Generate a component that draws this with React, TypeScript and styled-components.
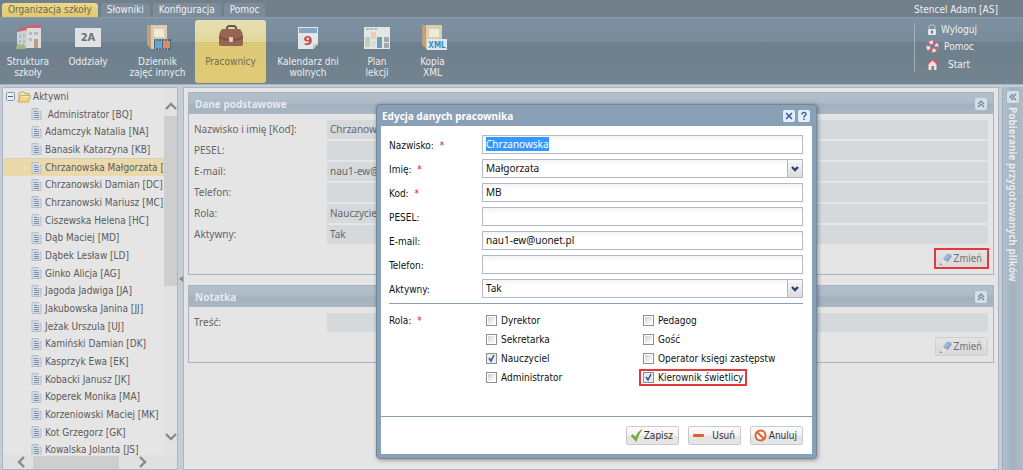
import React, { useEffect, useRef } from "react";
import styled, { createGlobalStyle, css } from "styled-components";

const wideFont = `"Noto Sans", "Open Sans", sans-serif`;

const GlobalStyle = createGlobalStyle`
  * { box-sizing: border-box; }
  body { margin: 0; background: #b9c4ce; }
  body, button, input, select {
    font-family: "DejaVu Sans Condensed", Tahoma, "Noto Sans", sans-serif;
    font-size: 10px;
  }
  button { padding: 0; cursor: pointer; }
  ul { list-style: none; margin: 0; padding: 0; }
`;

const Shell = styled.div`
  position: relative;
  display: flex;
  flex-direction: column;
  height: 100vh;
  overflow: hidden;
`;

/* ---------- header ---------- */

const TopBar = styled.header`
  display: flex;
  align-items: flex-end;
  gap: 3px;
  height: 17px;
  padding: 0 25px 0 2px;
  background: #72808c;
  flex-shrink: 0;
`;

const Tab = styled.button<{ $active?: boolean }>`
  height: 14px;
  padding: 0 6px;
  border: 0;
  border-radius: 3px 3px 0 0;
  line-height: 14px;
  white-space: nowrap;
  color: ${(p) => (p.$active ? "#6f6a4b" : "#eef1f4")};
  background: ${(p) => (p.$active ? "linear-gradient(#ead98d, #dfc970)" : "#7c8c9a")};
`;

const UserName = styled.span`
  margin-left: auto;
  line-height: 15px;
  color: #eef1f4;
`;

const Ribbon = styled.nav`
  display: flex;
  align-items: flex-start;
  height: 67px;
  padding-top: 2px;
  flex-shrink: 0;
  border-top: 1px solid #8b9cab;
  background: linear-gradient(#7d91a2 0, #788b9b 24px, #6e7f8d 24px, #73848f 100%);
`;

const RibbonButton = styled.button<{ $w: number; $active?: boolean }>`
  display: flex;
  flex-direction: column;
  align-items: center;
  gap: 6px;
  width: ${(p) => p.$w}px;
  height: 63px;
  padding-top: 4px;
  border: 0;
  border-radius: 3px;
  line-height: 11px;
  white-space: pre-line;
  color: ${(p) => (p.$active ? "#6f6a4b" : "#e9edf0")};
  background: ${(p) =>
    p.$active ? "linear-gradient(#e6dfb4 0, #e2d79b 22px, #dcc977 22px, #e0cb74 100%)" : "transparent"};
  svg { display: block; }
`;

const UserLinks = styled.div`
  display: flex;
  flex-direction: column;
  gap: 4px;
  margin: 3px 46px 0 auto;
  padding-left: 8px;
  border-left: 1px solid #a3afba;
  height: 48px;
  a {
    display: grid;
    grid-template-columns: 18px 36px;
    justify-items: center;
    align-items: center;
    height: 14px;
    color: #eef1f4;
    text-decoration: none;
  }
`;

/* ---------- body columns ---------- */

const Columns = styled.div`
  display: flex;
  flex: 1;
  min-height: 0;
  padding: 2px 0 0 2px;
  border-top: 1px solid #a9b4be;
  background: #c5ced7;
`;

const TreePanel = styled.aside`
  display: grid;
  grid-template-columns: 1fr 13px;
  grid-template-rows: 1fr 14px;
  width: 176px;
  border: 1px solid #aab6c2;
  background: #e5e5e5;
  flex-shrink: 0;
`;

const TreeList = styled.ul`
  min-height: 0;
  overflow: hidden;
  color: #5a5a5a;
`;

const TreeRow = styled.li<{ $selected?: boolean }>`
  display: flex;
  align-items: center;
  gap: 3px;
  height: 18px;
  padding-left: 28px;
  white-space: nowrap;
  &:nth-child(3n) { height: 17px; }
  &:first-child { height: 17px; padding-left: 3px; gap: 2px; }
  ${(p) => p.$selected && css`background: #e9d9ab; border-top: 1px solid #d8cfae;`}
  svg { flex-shrink: 0; }
  span { white-space: pre; }
`;

const ScrollV = styled.div`
  display: flex;
  flex-direction: column;
  align-items: center;
  padding: 14px 0 14px;
  background: #e2e2e2;
  i { width: 13px; height: 50%; margin: 6px 0 auto; background: #cecece; }
`;

const ScrollH = styled.div`
  display: flex;
  align-items: center;
  grid-column: 1 / 3;
  padding: 0 30px 0 14px;
  background: #e0e0e0;
  i { width: 86px; height: 13px; margin: 0 auto 0 8px; background: #cecece; }
`;

const Splitter = styled.div`
  display: flex;
  align-items: center;
  justify-content: center;
  width: 5px;
  flex-shrink: 0;
`;

const Main = styled.main`
  flex: 1;
  min-width: 0;
  padding: 4px;
  border: 1px solid #aab6c2;
  background: #e5e5e5;
  color: #666;
`;

const Panel = styled.section`
  margin-bottom: 10px;
  border: 1px solid #aab4be;
`;

const PanelHead = styled.div`
  display: flex;
  align-items: center;
  justify-content: space-between;
  height: 21px;
  padding: 0 6px;
  background: linear-gradient(#b3bfc9 0, #aebbc6 10px, #a2b1bf 11px, #a9b7c4 100%);
  h2 { margin: 0; font: bold 10px ${wideFont}; color: #e6eaed; }
`;

const ToolButton = styled.button<{ $bright?: boolean }>`
  display: flex;
  align-items: center;
  justify-content: center;
  width: 12px;
  height: 12px;
  border: 0;
  border-radius: 2px;
  background: ${(p) => (p.$bright ? "#e2effa" : "#d3dee7")};
`;

const PanelBody = styled.div`
  display: flex;
  flex-direction: column;
  gap: 2px;
  padding: 6px 5px 6px;
`;

const Row = styled.div`
  display: grid;
  grid-template-columns: 133px 1fr;
  height: 19px;
  font-family: ${wideFont};
  line-height: 18px;
  output { padding-left: 3px; background: #d5d9dc; }
`;

const ChangeLine = styled.div<{ $marked?: boolean }>`
  display: flex;
  justify-content: flex-end;
  padding-top: 3px;
  button {
    ${(p) => p.$marked && css`outline: 2px solid #e5383b; outline-offset: -1px; border-radius: 0;`}
  }
`;

const Button = styled.button<{ $muted?: boolean }>`
  display: flex;
  align-items: center;
  justify-content: space-between;
  width: 53px;
  height: 19px;
  padding: 0 5px 0 3px;
  border: 1px solid ${(p) => (p.$muted ? "#cfcfcf" : "#c9c9c9")};
  border-radius: 2px;
  color: ${(p) => (p.$muted ? "#707070" : "#333")};
  background: ${(p) =>
    p.$muted ? "linear-gradient(#e3e3e3, #d9d9d9)" : "linear-gradient(#fbfbfb 0, #f2f2f2 50%, #e4e4e4 55%, #e6e6e6 100%)"};
`;

const SidePanel = styled.aside`
  display: flex;
  flex-direction: column;
  align-items: center;
  gap: 4px;
  width: 21px;
  margin-left: 3px;
  padding-top: 4px;
  border-left: 1px solid #9eadbb;
  background: linear-gradient(90deg, #b3bfc9 0, #a3b2c0 10px, #afbcc7 100%);
  flex-shrink: 0;
  strong {
    font-family: ${wideFont};
    writing-mode: vertical-rl;
    white-space: nowrap;
    color: #e6eaed;
  }
`;

/* ---------- dialog ---------- */

const Dialog = styled.section`
  position: absolute;
  top: 104px;
  left: 376px;
  width: 441px;
  padding: 0 4px 4px;
  border: 1px solid #73879b;
  border-radius: 4px;
  background: #8aa0b6;
  box-shadow: 1px 1px 4px #0006;
`;

const DialogHead = styled.div`
  display: flex;
  align-items: center;
  gap: 3px;
  height: 21px;
  padding: 0 2px 0 1px;
  h1 { margin: 0 auto 0 0; font: bold 10px ${wideFont}; color: #fff; }
`;

const Form = styled.form`
  background: #fff;
  color: #111;
`;

const Fields = styled.div`
  display: flex;
  flex-direction: column;
  gap: 5px;
  margin: 0 9px 0 8px;
  padding: 9px 0 5px;
  border-bottom: 1px solid #8ba0b6;
`;

const Field = styled.div`
  display: grid;
  grid-template-columns: 93px 1fr;
  align-items: center;
  height: 19px;
  label { padding-top: 2px; }
`;

const Star = styled.span`
  margin-left: 3px;
  color: #e02020;
`;

const controlStyle = css`
  display: block;
  width: 100%;
  height: 19px;
  padding: 0 3px 1px;
  border: 1px solid #b5b8c8;
  border-radius: 0;
  outline: 0;
  font-family: ${wideFont};
  color: #111;
  background: linear-gradient(#f3f3f3, #fff 5px);
`;

const TextInput = styled.input`
  ${controlStyle}
  &::selection { background: #3399ff; color: #fff; }
`;

const SelectWrap = styled.div`
  position: relative;
  select { ${controlStyle} appearance: none; }
  span {
    position: absolute;
    top: 0;
    right: 0;
    display: flex;
    align-items: center;
    justify-content: center;
    width: 16px;
    height: 19px;
    border: 1px solid #b5b8c8;
    background: linear-gradient(#f8f8f8, #dcdce2);
    pointer-events: none;
  }
`;

const Roles = styled.fieldset`
  display: grid;
  grid-template-columns: 97px 157px 1fr;
  margin: 0;
  padding: 7px 9px 29px 8px;
  border: 0;
  ul { display: grid; grid-auto-rows: 19px; }
  li { display: flex; align-items: center; }
`;

const RoleTitle = styled.div`
  height: 19px;
  line-height: 19px;
`;

const Check = styled.label<{ $marked?: boolean }>`
  display: flex;
  align-items: center;
  gap: 4px;
  height: 13px;
  outline: ${(p) => (p.$marked ? "2px solid #e5383b" : "none")};
  padding: 0 2px;
  margin-left: -2px;
  input {
    appearance: none;
    width: 11px;
    height: 11px;
    margin: 0;
    border: 1px solid #8e8f8f;
    background: linear-gradient(135deg, #d0d3d6, #fff) content-box;
    padding: 1px;
  }
  input:checked {
    background: url("data:image/svg+xml,%3Csvg xmlns='http://www.w3.org/2000/svg' viewBox='0 0 9 9'%3E%3Cpath d='M2 4l2 3 3-6' fill='none' stroke='%23374f8c' stroke-width='1.5'/%3E%3C/svg%3E") center / 9px 9px #e7ecf3;
  }
`;

const Footer = styled.div`
  display: flex;
  justify-content: flex-end;
  gap: 9px;
  padding: 9px 9px 9px;
  border-top: 1px solid #8ba0b6;
`;

/* ---------- icons ---------- */

const Chevron = ({ d, color = "#8a8a8a", w = 12, h = 8 }: { d: string; color?: string; w?: number; h?: number }) => (
  <svg width={w} height={h} viewBox={`0 0 ${w} ${h}`}>
    <path d={d} fill="none" stroke={color} strokeWidth="2.4" />
  </svg>
);

const Collapse = ({ left = false }: { left?: boolean }) => (
  <svg width="8" height="8" viewBox="0 0 8 8">
    <path d={left ? "M4 1L1 4l3 3M7 1L4 4l3 3" : "M1 4l3-3 3 3M1 7l3-3 3 3"} fill="none" stroke="#71849a" strokeWidth="1.2" />
  </svg>
);

const PageIcon = () => (
  <svg width="11" height="12" viewBox="0 0 11 12">
    <path d="M1 .5h6l3 3v8H1z" fill="#d3dce6" stroke="#b3bdca" />
    <path d="M7 .5v3h3" fill="#fff" stroke="#b3bdca" />
    <path d="M3 3.500h3M3 5.500h5M3 7.500h5M3 9.500h5" stroke="#8191a5" />
  </svg>
);

const FolderIcon = () => (
  <svg width="14" height="12" viewBox="0 0 14 12">
    <path d="M2 10V2l1-1h4l1 1.500h4V6" fill="#e8e2c8" stroke="#b9a868" />
    <path d="M1 11L3.500 4.500H13.500L11.500 11z" fill="#ecd886" stroke="#c9ad58" />
    <path d="M4 5.500h8" stroke="#f6e9ae" />
  </svg>
);

const MinusBox = () => (
  <svg width="9" height="9" viewBox="0 0 9 9">
    <rect x=".5" y=".5" width="8" height="8" rx="1" fill="#eceff2" stroke="#8796a8" />
    <path d="M2 4.500h5" stroke="#53657d" />
  </svg>
);

const SchoolIcon = () => (
  <svg width="28" height="26" viewBox="0 0 28 26">
    <path d="M3 8l10-4v20H3z" fill="#cdd0d3" />
    <path d="M13 4h14v20H13z" fill="#dddbdb" />
    <path d="M3 8l2-4 8-1v3zM13 4l1-3h13v3z" fill="#c4686d" />
    <path d="M5 11h2v3H5zM9 10h2v3H9zM5 16h2v3H5zM9 16h2v3H9zM15 8h3v3h-3zM20 8h4v3h-4zM15 14h3v3h-3z" fill="#b1b9c1" />
    <path d="M20 15h4v9h-4z" fill="#b99a8c" />
    <path d="M2 25c0-5 3-6 5-4 2-2 4-1 5 4z" fill="#a0b486" />
  </svg>
);

const ClassIcon = () => (
  <svg width="28" height="26" viewBox="0 0 28 26">
    <rect x="1" y="4" width="26" height="19" fill="#dfe1e3" />
    <text x="14" y="17" textAnchor="middle" fontSize="10" fontWeight="bold" fill="#6d7276" fontFamily="DejaVu Sans">2A</text>
  </svg>
);

const BookBase = () => (
  <>
    <path d="M3 1h5v24l-5-4z" fill="#bda179" />
    <path d="M7 1h16v24H7z" fill="#dccdae" />
    <rect x="10" y="5" width="10" height="8" fill="#eeeade" />
  </>
);

const JournalIcon = () => (
  <svg width="28" height="26" viewBox="0 0 28 26">
    <BookBase />
    <rect x="10" y="15" width="17" height="11" fill="#54697a" />
    <rect x="11" y="17" width="7" height="7" fill="#65a5cc" />
    <rect x="19" y="17" width="7" height="7" fill="#d98d63" />
    <path d="M11 16h15M11 25h15" stroke="#dfe4e8" strokeDasharray="1 2" />
  </svg>
);

const BriefcaseIcon = () => (
  <svg width="28" height="26" viewBox="0 0 28 26">
    <path d="M10 6V3.500L11.500 2h6L19 3.500V6" fill="none" stroke="#6f5548" strokeWidth="2" />
    <path d="M3 8l2-3h18l2 3 1 4v9l-2 1H4l-2-1v-9z" fill="#966553" />
    <path d="M2 12c7 4 17 4 24 0v2c-7 4-17 4-24 0z" fill="#804f3f" />
    <rect x="12" y="13" width="4" height="5" rx="1" fill="#e0cfae" />
  </svg>
);

const CalendarIcon = () => (
  <svg width="28" height="26" viewBox="0 0 28 26">
    <path d="M4 3h20v17l-5 5H4z" fill="#e3e5e7" />
    <path d="M5 4h18v5H5z" fill="#7fa8c8" />
    <path d="M24 20h-5v5z" fill="#c2c8cd" />
    <text x="14" y="21" textAnchor="middle" fontSize="13" fontWeight="bold" fill="#c24b59" fontFamily="DejaVu Sans">9</text>
  </svg>
);

const PlanIcon = () => (
  <svg width="28" height="26" viewBox="0 0 28 26">
    <rect x="1" y="3" width="26" height="22" fill="#e4e6e5" />
    <path d="M3 5h12" stroke="#858d92" strokeDasharray="3 1" />
    <path d="M2 13h5v10H2z" fill="#b9d2b5" />
    <path d="M8 8h5v7H8z" fill="#e8cfb0" />
    <path d="M14 13h5v11h-5z" fill="#6f9db3" />
    <path d="M21 13h5v5h-5zM21 19h5v5h-5z" fill="#a4a9ad" />
    <path d="M8 17h5v6H8z" fill="#d3e0d6" />
  </svg>
);

const XmlIcon = () => (
  <svg width="28" height="26" viewBox="0 0 28 26">
    <BookBase />
    <rect x="8" y="15" width="20" height="11" fill="#dde8f0" />
    <text x="18" y="24" textAnchor="middle" fontSize="8" fontWeight="bold" fill="#3f8dc0" fontFamily="DejaVu Sans Condensed">XML</text>
  </svg>
);

const LockIcon = () => (
  <svg width="12" height="13" viewBox="0 0 12 13">
    <path d="M3 6V3.500L4.500 2h3L9 3.500V6" fill="none" stroke="#a8b1b8" strokeWidth="1.500" />
    <rect x="2" y="6" width="8" height="6" rx="1" fill="#e3e5e6" />
    <path d="M6 7.500v3" stroke="#4f565c" strokeWidth="1.500" />
  </svg>
);

const HelpIcon = () => (
  <svg width="13" height="13" viewBox="0 0 13 13">
    <circle cx="6.500" cy="6.500" r="4.300" fill="none" stroke="#e2e2e3" strokeWidth="3.600" />
    <circle cx="6.500" cy="6.500" r="4.300" fill="none" stroke="#c65b68" strokeWidth="3.600" strokeDasharray="3.380 3.380" />
  </svg>
);

const HomeIcon = () => (
  <svg width="13" height="13" viewBox="0 0 13 13">
    <path d="M2.500 6l4-4 4 4v6h-8z" fill="#e6e3e1" />
    <path d="M.5 7l6-5.500 6 5.500M10 1.500v3" fill="none" stroke="#cc5561" strokeWidth="1.600" />
    <path d="M5.500 8h2.500v4H5.500z" fill="#8d7b75" />
  </svg>
);

const PencilIcon = () => (
  <svg width="14" height="14" viewBox="0 0 14 14">
    <path d="M4 7l4-5h3l2 2-4 6-3-1z" fill="#86a9cd" />
    <path d="M6 7l4-4" stroke="#a9c7e3" strokeWidth="1.500" />
    <path d="M4 7l4 3-5 2z" fill="#ece6da" />
    <path d="M1 11v2h2z" fill="#777" />
  </svg>
);

const SaveIcon = () => (
  <svg width="13" height="13" viewBox="0 0 13 13">
    <path d="M1 7l2-1.500 2.500 3C7 5 9 2 12 .5 9.500 4 7.500 8 6 12.500 4.500 10 3 8.500 1 7z" fill="#6db52d" stroke="#559522" strokeWidth=".5" />
  </svg>
);

const RemoveIcon = () => (
  <svg width="13" height="13" viewBox="0 0 13 13">
    <rect x="1" y="5" width="11" height="3" rx="1" fill="#e0602e" />
  </svg>
);

const CancelIcon = () => (
  <svg width="13" height="13" viewBox="0 0 13 13">
    <circle cx="6.500" cy="6.500" r="5" fill="#fff" stroke="#e0622f" strokeWidth="2" />
    <path d="M3 3l7 7" stroke="#e0622f" strokeWidth="2" />
  </svg>
);

/* ---------- content ---------- */

const tabs = ["Organizacja szkoły", "Słowniki", "Konfiguracja", "Pomoc"];

const tools = [
  { label: "Struktura\nszkoły", w: 56, Icon: SchoolIcon },
  { label: "Oddziały", w: 64, Icon: ClassIcon },
  { label: "Dziennik\nzajęć innych", w: 75, Icon: JournalIcon },
  { label: "Pracownicy", w: 71, Icon: BriefcaseIcon },
  { label: "Kalendarz dni\nwolnych", w: 84, Icon: CalendarIcon },
  { label: "Plan\nlekcji", w: 54, Icon: PlanIcon },
  { label: "Kopia\nXML", w: 57, Icon: XmlIcon },
];

const people = [
  " Administrator [BQ]", "Adamczyk Natalia [NA]", "Banasik Katarzyna [KB]", "Chrzanowska Małgorzata [MB]",
  "Chrzanowski Damian [DC]", "Chrzanowski Mariusz [MC]", "Ciszewska Helena [HC]", "Dąb Maciej [MD]",
  "Dąbek Lesław [LD]", "Ginko Alicja [AG]", "Jagoda Jadwiga [JA]", "Jakubowska Janina [JJ]",
  "Jeżak Urszula [UJ]", "Kamiński Damian [DK]", "Kasprzyk Ewa [EK]", "Kobacki Janusz [JK]",
  "Koperek Monika [MA]", "Korzeniowski Maciej [MK]", "Kot Grzegorz [GK]", "Kowalska Jolanta [JS]",
];

const details = [
  ["Nazwisko i imię [Kod]:", "Chrzanowska Małgorzata [MB]"],
  ["PESEL:", ""],
  ["E-mail:", "nau1-ew@uonet.pl"],
  ["Telefon:", ""],
  ["Rola:", "Nauczyciel"],
  ["Aktywny:", "Tak"],
];

const fields = [
  { id: "nazwisko", label: "Nazwisko:", value: "Chrzanowska", required: true },
  { id: "imie", label: "Imię:", value: "Małgorzata", required: true, select: true },
  { id: "kod", label: "Kod:", value: "MB", required: true },
  { id: "pesel", label: "PESEL:", value: "" },
  { id: "email", label: "E-mail:", value: "nau1-ew@uonet.pl" },
  { id: "telefon", label: "Telefon:", value: "" },
  { id: "aktywny", label: "Aktywny:", value: "Tak", select: true },
];

const roles = [
  [["Dyrektor", false], ["Sekretarka", false], ["Nauczyciel", true], ["Administrator", false]],
  [["Pedagog", false], ["Gość", false], ["Operator księgi zastępstw", false], ["Kierownik świetlicy", true]],
] as [string, boolean][][];

function EditDialog() {
  const first = useRef<HTMLInputElement>(null);
  useEffect(() => {
    first.current?.focus();
    first.current?.select();
  }, []);

  return (
    <Dialog role="dialog" aria-labelledby="dialog-title">
      <DialogHead>
        <h1 id="dialog-title">Edycja danych pracownika</h1>
        <ToolButton $bright aria-label="Zamknij">
          <svg width="8" height="8" viewBox="0 0 8 8"><path d="M1 1l6 6M7 1L1 7" stroke="#4157a0" strokeWidth="1.500" /></svg>
        </ToolButton>
        <ToolButton $bright aria-label="Pomoc">
          <svg width="8" height="10" viewBox="0 0 8 10"><path d="M2 3.500C2 .5 6.500 1 6 3.500 5.800 4.800 4 4.500 4 6.500M4 7.500V9" fill="none" stroke="#40679a" strokeWidth="1.500" /></svg>
        </ToolButton>
      </DialogHead>
      <Form onSubmit={(e) => e.preventDefault()}>
        <Fields>
          {fields.map((f, i) => (
            <Field key={f.id}>
              <label htmlFor={f.id}>{f.label} {f.required && <Star>*</Star>}</label>
              {f.select ? (
                <SelectWrap>
                  <select id={f.id} defaultValue={f.value}><option>{f.value}</option></select>
                  <span><Chevron d="M1 1l3 3 3-3" w={8} h={6} color="#2f4468" /></span>
                </SelectWrap>
              ) : (
                <TextInput id={f.id} ref={i === 0 ? first : undefined} defaultValue={f.value} />
              )}
            </Field>
          ))}
        </Fields>
        <Roles aria-labelledby="role-title">
          <RoleTitle id="role-title">Rola: <Star>*</Star></RoleTitle>
          {roles.map((col, c) => (
            <ul key={c}>
              {col.map(([name, on]) => (
                <li key={name}>
                  <Check $marked={name === "Kierownik świetlicy"}>
                    <input type="checkbox" defaultChecked={on} />{name}
                  </Check>
                </li>
              ))}
            </ul>
          ))}
        </Roles>
        <Footer>
          <Button type="submit"><SaveIcon />Zapisz</Button>
          <Button type="button"><RemoveIcon />Usuń</Button>
          <Button type="button"><CancelIcon />Anuluj</Button>
        </Footer>
      </Form>
    </Dialog>
  );
}

export default function App() {
  return (
    <Shell>
      <GlobalStyle />
      <TopBar>
        {tabs.map((t, i) => <Tab key={t} $active={i === 0}>{t}</Tab>)}
        <UserName>Stencel Adam [AS]</UserName>
      </TopBar>
      <Ribbon>
        {tools.map(({ label, w, Icon }) => (
          <RibbonButton key={label} $w={w} $active={label === "Pracownicy"}><Icon />{label}</RibbonButton>
        ))}
        <UserLinks>
          <a href="#wyloguj"><LockIcon />Wyloguj</a>
          <a href="#pomoc"><HelpIcon />Pomoc</a>
          <a href="#start"><HomeIcon />Start</a>
        </UserLinks>
      </Ribbon>
      <Columns>
        <TreePanel>
          <TreeList>
            <TreeRow><MinusBox /><FolderIcon /><span>Aktywni</span></TreeRow>
            {people.map((p) => (
              <TreeRow key={p} $selected={p.startsWith("Chrzanowska")}><PageIcon /><span>{p}</span></TreeRow>
            ))}
          </TreeList>
          <ScrollV>
            <Chevron d="M1 7l5-5 5 5" /><i /><Chevron d="M1 1l5 5 5-5" />
          </ScrollV>
          <ScrollH>
            <Chevron d="M7 1L2 6l5 5" w={8} h={12} /><i /><Chevron d="M1 1l5 5-5 5" w={8} h={12} />
          </ScrollH>
        </TreePanel>
        <Splitter>
          <svg width="4" height="6" viewBox="0 0 4 6"><path d="M4 0v6L0 3z" fill="#7f8d9b" /></svg>
        </Splitter>
        <Main>
          <Panel>
            <PanelHead><h2>Dane podstawowe</h2><ToolButton aria-label="Zwiń"><Collapse /></ToolButton></PanelHead>
            <PanelBody>
              {details.map(([k, v]) => <Row key={k}><span>{k}</span><output>{v}</output></Row>)}
              <ChangeLine $marked><Button $muted><PencilIcon />Zmień</Button></ChangeLine>
            </PanelBody>
          </Panel>
          <Panel>
            <PanelHead><h2>Notatka</h2><ToolButton aria-label="Zwiń"><Collapse /></ToolButton></PanelHead>
            <PanelBody>
              <Row><span>Treść:</span><output /></Row>
              <ChangeLine><Button $muted><PencilIcon />Zmień</Button></ChangeLine>
            </PanelBody>
          </Panel>
        </Main>
        <SidePanel>
          <ToolButton aria-label="Rozwiń"><Collapse left /></ToolButton>
          <strong>Pobieranie przygotowanych plików</strong>
        </SidePanel>
      </Columns>
      <EditDialog />
    </Shell>
  );
}
